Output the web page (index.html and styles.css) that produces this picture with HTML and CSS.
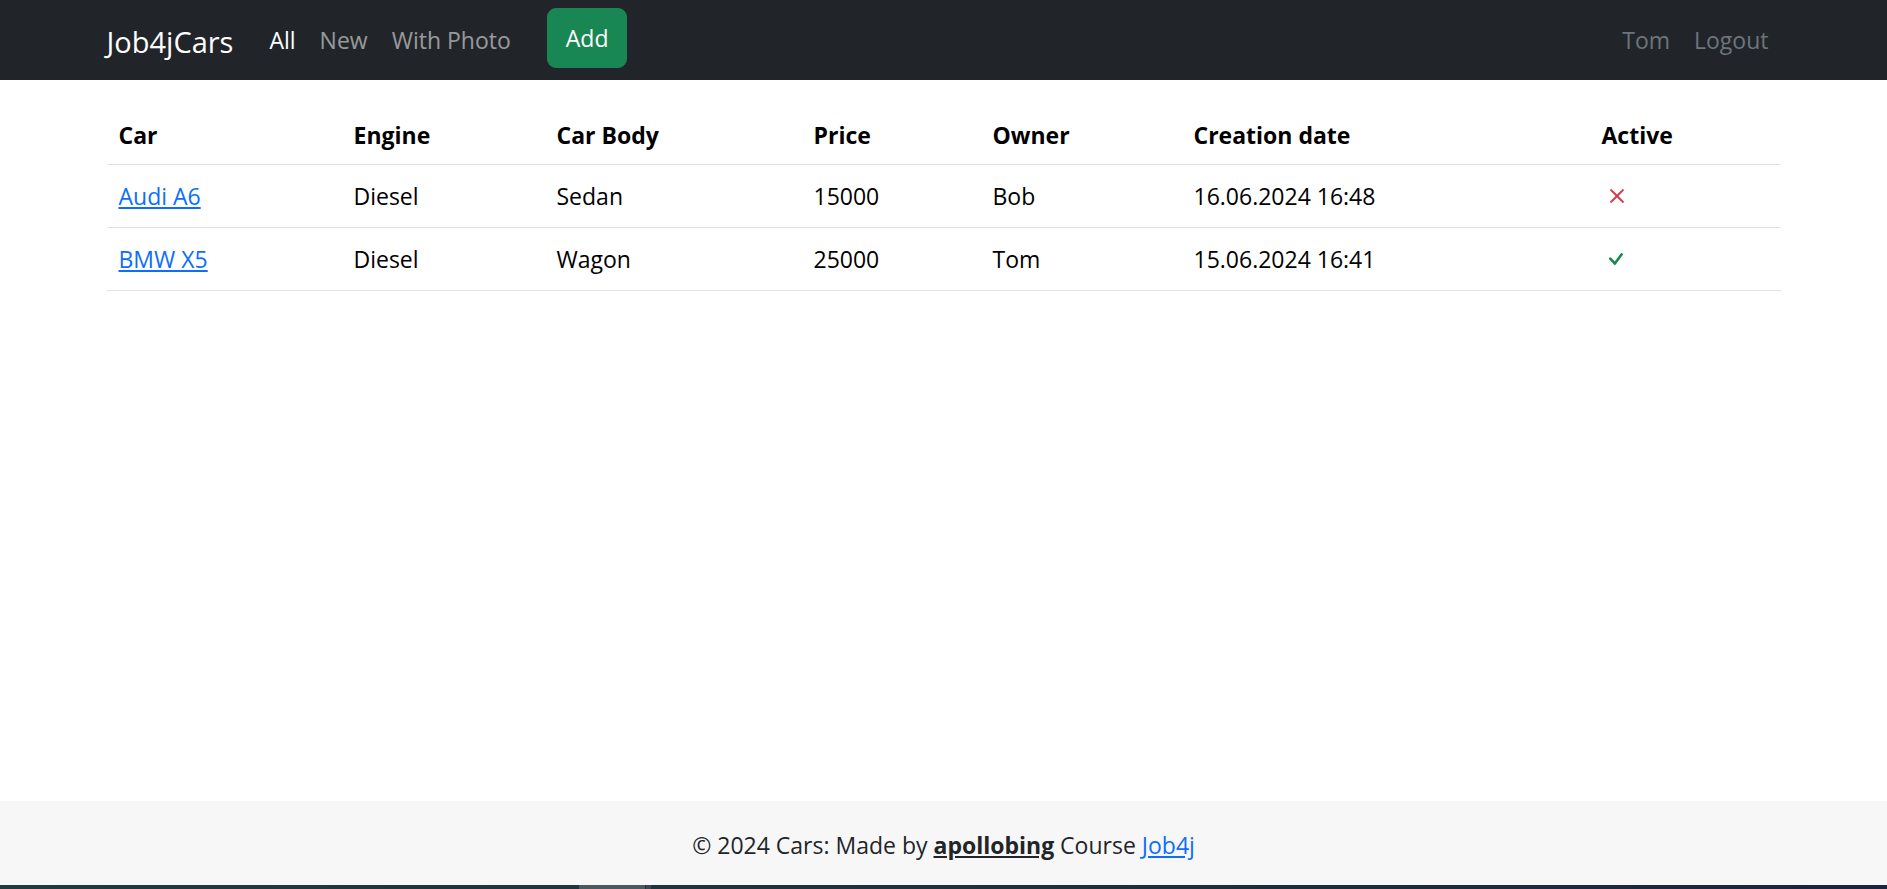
FILE: index.html
```html
<!DOCTYPE html>
<html lang="en">
<head>
<meta charset="utf-8">
<title>Job4jCars</title>
<link rel="stylesheet" href="styles.css">
</head>
<body>
<div class="page">
  <header class="navbar">
    <div class="container nav-inner">
      <a class="brand" href="#">Job4jCars</a>
      <ul class="nav-links">
        <li><a class="nav-link active" href="#">All</a></li>
        <li><a class="nav-link" href="#">New</a></li>
        <li><a class="nav-link" href="#">With Photo</a></li>
      </ul>
      <a class="btn-add" href="#">Add</a>
      <ul class="nav-links nav-right">
        <li><a class="nav-link muted" href="#">Tom</a></li>
        <li><a class="nav-link muted" href="#">Logout</a></li>
      </ul>
    </div>
  </header>

  <main class="container main">
    <table class="cars">
      <colgroup>
        <col class="c-car"><col class="c-engine"><col class="c-body"><col class="c-price"><col class="c-owner"><col class="c-date"><col class="c-active">
      </colgroup>
      <thead>
        <tr><th>Car</th><th>Engine</th><th>Car Body</th><th>Price</th><th>Owner</th><th>Creation date</th><th>Active</th></tr>
      </thead>
      <tbody>
        <tr>
          <td><a class="link" href="#">Audi A6</a></td>
          <td>Diesel</td><td>Sedan</td><td>15000</td><td>Bob</td><td>16.06.2024 16:48</td>
          <td><svg class="icon icon-x" width="14" height="14" viewBox="4.45 4.45 7.1 7.1" aria-hidden="true"><path fill="#dc3545" d="M4.646 4.646a.5.5 0 0 1 .708 0L8 7.293l2.646-2.647a.5.5 0 0 1 .708.708L8.707 8l2.647 2.646a.5.5 0 0 1-.708.708L8 8.707l-2.646 2.647a.5.5 0 0 1-.708-.708L7.293 8 4.646 5.354a.5.5 0 0 1 0-.708"/></svg></td>
        </tr>
        <tr>
          <td><a class="link" href="#">BMW X5</a></td>
          <td>Diesel</td><td>Wagon</td><td>25000</td><td>Tom</td><td>15.06.2024 16:41</td>
          <td><svg class="icon icon-check" width="14" height="12" viewBox="4.1 4.75 8.2 6.6" preserveAspectRatio="none" aria-hidden="true"><path fill="#198754" d="M10.97 4.97a.75.75 0 0 1 1.07 1.05l-3.99 4.99a.75.75 0 0 1-1.08.02L4.324 8.384a.75.75 0 1 1 1.06-1.06l2.094 2.093 3.473-4.425z"/></svg></td>
        </tr>
      </tbody>
    </table>
  </main>

  <footer class="footer">
    <span>© 2024 Cars: Made by <a class="author" href="#">apollobing</a> Course <a class="link" href="#">Job4j</a></span>
  </footer>
  <div class="taskbar"><span class="taskbar-item"></span><span class="taskbar-sep"></span></div>
</div>
</body>
</html>
```

FILE: styles.css
```css
html, body {
  margin: 0;
  padding: 0;
}

body {
  font-family: "Open Sans", "Noto Sans", "Liberation Sans", sans-serif;
  font-size: 23px;
  line-height: 1.5;
  color: #212529;
  background: #ffffff;
}

.page {
  display: flex;
  flex-direction: column;
  min-height: 889px;
}

.container {
  width: 1674px;
  margin: 0 auto;
}

/* Navbar */
.navbar {
  background: #212529;
  height: 80px;
  flex: none;
}

.nav-inner {
  height: 100%;
  display: flex;
  align-items: center;
}

.brand {
  color: #ffffff;
  font-size: 29px;
  text-decoration: none;
  margin-right: 24px;
  line-height: 45px;
  padding-top: 2px;
}

.nav-links {
  list-style: none;
  margin: 0;
  padding: 0;
  display: flex;
  align-items: center;
}

.nav-link {
  display: block;
  padding: 12px 12px;
  color: rgba(255, 255, 255, 0.55);
  text-decoration: none;
  line-height: 36px;
}

.nav-link.active {
  color: #ffffff;
}

.nav-link.muted {
  color: #6c757d;
}

.nav-right {
  margin-left: auto;
}

.btn-add {
  margin-left: 24px;
  height: 60px;
  box-sizing: border-box;
  padding: 0 18px;
  display: flex;
  align-items: center;
  background: #198754;
  border: 1px solid #198754;
  border-radius: 9px;
  color: #ffffff;
  text-decoration: none;
  margin-top: -4px;
}

/* Table */
.main {
  flex: 1;
  padding-top: 23px;
}

.cars {
  width: 100%;
  border-collapse: collapse;
  table-layout: fixed;
}

.c-car { width: 235px; }
.c-engine { width: 203px; }
.c-body { width: 257px; }
.c-price { width: 179px; }
.c-owner { width: 201px; }
.c-date { width: 408px; }
.c-active { width: 191px; }

.cars th,
.cars td {
  text-align: left;
  padding: 13px 12px;
  line-height: 36px;
  height: 36px;
  border-bottom: 1px solid #dee2e6;
  vertical-align: middle;
  color: #000000;
}

.cars th {
  font-weight: 700;
  padding-top: 14px;
  padding-bottom: 11px;
}

.link {
  color: #0d6efd;
  text-decoration: underline;
}

.icon {
  display: block;
}

.icon-x {
  margin-left: 8px;
}

.icon-check {
  margin-left: 7px;
}

/* Footer */
.footer {
  background: #f7f7f7;
  height: 84px;
  box-sizing: border-box;
  padding: 26px 0 22px;
  text-align: center;
  line-height: 36px;
  color: #212529;
  flex: none;
}

.author {
  color: #212529;
  font-weight: 700;
  text-decoration: underline;
}

.taskbar {
  height: 4px;
  flex: none;
  background: linear-gradient(90deg, #203a3e 0%, #1e2f3c 60%, #1b2440 100%);
  display: flex;
}

.taskbar-item {
  margin-left: 579px;
  width: 66px;
  background: #4b5a5e;
}

.taskbar-sep {
  margin-left: 1px;
  width: 5px;
  background: #3a474c;
}
```
